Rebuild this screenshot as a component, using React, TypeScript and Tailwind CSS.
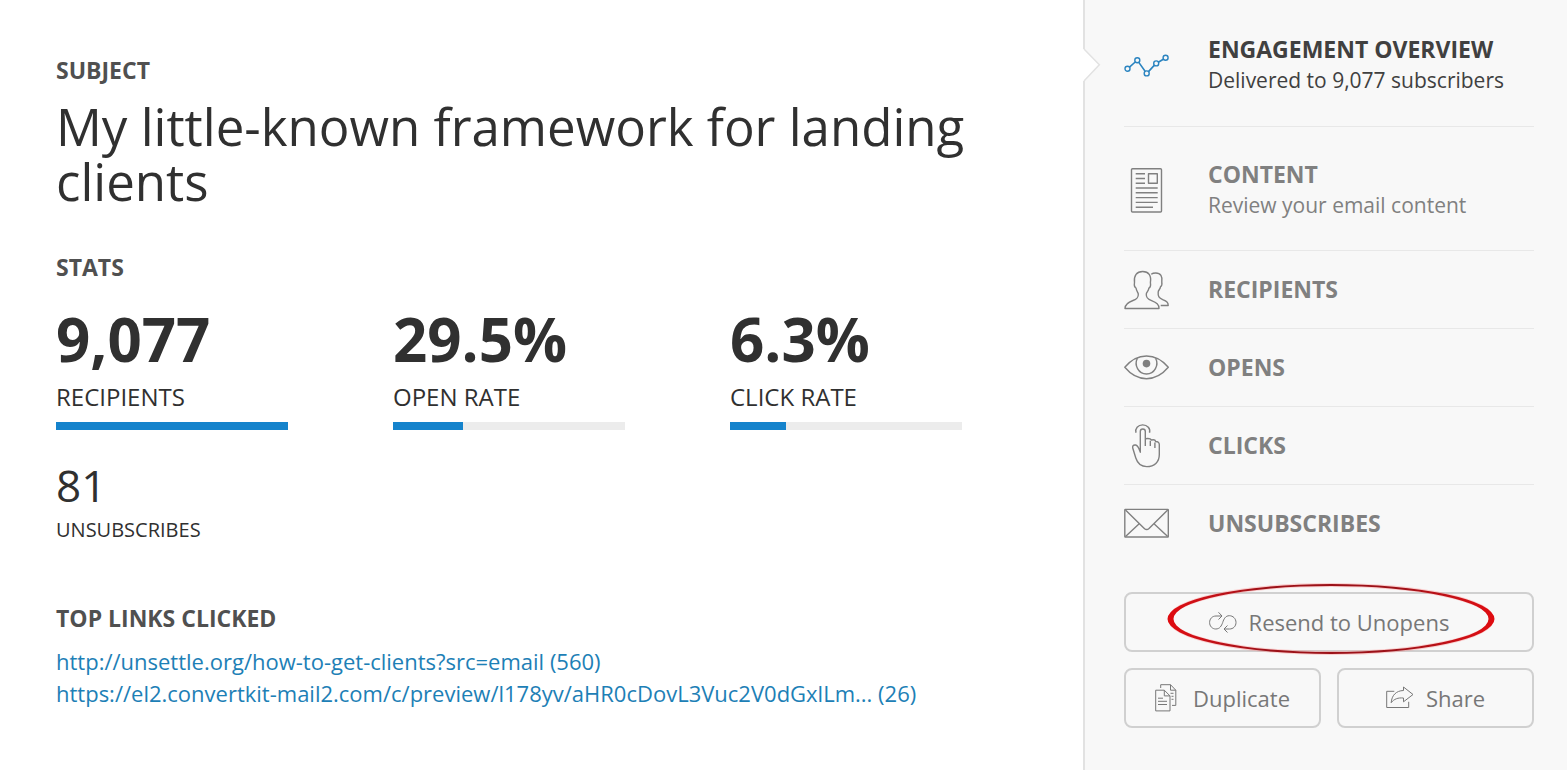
import type { ReactNode } from 'react'

const links = [
  { label: 'http://unsettle.org/how-to-get-clients?src=email (560)', href: '#how-to-get-clients' },
  { label: 'https://el2.convertkit-mail2.com/c/preview/l178yv/aHR0cDovL3Vuc2V0dGxlLm... (26)', href: '#preview' },
]

const stats = [
  { value: '9,077', label: 'RECIPIENTS', fill: 100 },
  { value: '29.5%', label: 'OPEN RATE', fill: 30 },
  { value: '6.3%', label: 'CLICK RATE', fill: 24 },
]

function Icon({ children, className = '' }: { children: ReactNode; className?: string }) {
  return (
    <svg
      className={`h-[45px] w-[45px] shrink-0 ${className}`}
      viewBox="0 0 45 45"
      fill="none"
      stroke="currentColor"
      strokeWidth="1.4"
      strokeLinejoin="round"
      aria-hidden="true"
    >
      {children}
    </svg>
  )
}

const ChartIcon = () => (
  <Icon className="text-[#2b84c0]">
    <path d="M5.5 24.2 11.2 19M14.8 19.4l6.3 8.8M24.5 28.6l5.7-6.2M34.3 19.2l5-2.9" strokeWidth="1.6" />
    <circle cx="3.5" cy="25.8" r="2.5" />
    <circle cx="13.3" cy="17.2" r="2.5" />
    <circle cx="22.7" cy="30.4" r="2.5" />
    <circle cx="32.2" cy="20.4" r="2.5" />
    <circle cx="41.6" cy="14.8" r="2.5" />
  </Icon>
)

const ContentIcon = () => (
  <Icon>
    <rect x="7.5" y="0.8" width="30" height="43.2" rx="1" />
    <rect x="24.5" y="5.7" width="8.8" height="9.6" />
    <path d="M11.7 5.7H21M11.7 10.5H21M11.7 15.3H21M11.7 20h22M11.7 24.8h22M11.7 29.6h22M11.7 34.4h22M11.7 39.2H29" />
  </Icon>
)

const RecipientsIcon = () => (
  <Icon>
    <path d="M1 41.500c0-4.200 3-6.200 8-8 4.300-1.500 5.500-3 5.300-6.500-.1-1.600-1.800-2.600-2.300-6-1.500-.8-2-2.500-1.500-5.500-.8-7 2.200-11 8.200-11s8.800 4 7.700 11c.5 3-.2 4.900-1.500 5.700-.5 3.200-2.500 4-2.600 5.800-.3 3.500 1 5 5.300 6.700 5 2 7.400 3.600 7.400 7.800z" />
    <path d="M27.200 7.300c1.300-1 2.900-1.300 4.600-1.300 4.700 0 7 3.300 6 9.200.4 2.500 0 3.800-1.200 4.500-.5 2.800-2.200 3.300-2.400 5.300-.4 4.500.8 6 4.500 7.700 4 1.700 5.600 2.600 5.500 5.800h-7.500" />
  </Icon>
)

const OpensIcon = () => (
  <Icon>
    <path d="M.8 22.300C6.500 15.500 13.500 11 22.500 11s16 4.500 21.800 11.300C38.500 29.200 31.500 33.700 22.500 33.700S6.500 29.200.8 22.300z" />
    <path d="M13.400 13.200C9.900 20 14.300 29 22.500 29s12.600-9 9.100-15.800" />
    <circle cx="22.5" cy="18.6" r="3.8" fill="currentColor" stroke="none" />
  </Icon>
)

const ClicksIcon = () => (
  <Icon>
    <path d="M12 9.700C10.800 5.500 14 1.900 18.700 1.900s8 3.600 6.800 7.800" />
    <path d="M21.300 23V8.600c0-3.400-5-3.400-5 0v20.600c-1.200-3.200-2-6.800-4.700-7.200-2.500-.4-3.400 1.200-2.800 3.300l3 9.700c1.800 5.600 5.300 8.600 11 8.600 7.500 0 12.500-4.500 12.500-12.200V21.500c0-1.900-1.500-3.100-3.600-3-.4-1.400-2.300-2-4.200-1.500-.8-1.200-3.200-1.800-6.200-1.200M26.300 23v-5.300M30.900 25v-5.500" />
  </Icon>
)

const UnsubscribesIcon = () => (
  <Icon>
    <rect x="0.8" y="8.4" width="43.5" height="27.6" rx="0.5" />
    <path d="M1.500 9l18.800 18.400c1.700 1.600 3 1.600 4.700 0L43.700 9M1.500 35.400 15.200 22.800M43.700 35.400 30 22.800" />
  </Icon>
)

const reports = [
  {
    title: 'ENGAGEMENT OVERVIEW',
    text: 'Delivered to 9,077 subscribers',
    icon: ChartIcon,
    className: 'pt-[34px] pb-[30px] text-[#404040]',
  },
  {
    title: 'CONTENT',
    text: 'Review your email content',
    icon: ContentIcon,
    className: 'pt-[32px] pb-[29px] text-[#808080]',
  },
  { title: 'RECIPIENTS', icon: RecipientsIcon, className: 'py-4 text-[#808080]' },
  { title: 'OPENS', icon: OpensIcon, className: 'py-4 text-[#808080]' },
  { title: 'CLICKS', icon: ClicksIcon, className: 'py-4 text-[#808080]' },
  { title: 'UNSUBSCRIBES', icon: UnsubscribesIcon, className: 'py-4 text-[#808080]' },
]

const buttonClass =
  'relative flex h-[60px] w-full items-center justify-center rounded-lg border-2 border-[#d0d0d0] text-[22px] text-[#777]'

function Heading({ children, className = '' }: { children: ReactNode; className?: string }) {
  return <h2 className={`text-[23px] leading-[30px] font-bold text-[#505050] ${className}`}>{children}</h2>
}

export default function App() {
  return (
    <div className="flex min-h-screen bg-white font-['Open_Sans',sans-serif] text-[#303030]">
      <main className="min-w-0 flex-1 pt-[55px] pr-[109px] pb-14 pl-14">
        {/* Subject */}
        <Heading>SUBJECT</Heading>
        <h1 className="mt-[14px] text-[51px] leading-[55px]">My little-known framework for landing clients</h1>

        {/* Stats */}
        <Heading className="mt-[43px]">STATS</Heading>
        <div className="mt-[27px] grid grid-cols-3 gap-[105px] pr-3">
          {stats.map((stat) => (
            <div key={stat.label}>
              <p className="text-[60px] leading-[60px] font-bold">{stat.value}</p>
              <p className="mt-3 text-[24px] leading-[32px]">{stat.label}</p>
              <div className="mt-[9px] h-2 bg-[#ececec]">
                <div className="h-2 bg-[#1583cc]" style={{ width: `${stat.fill}%` }} />
              </div>
            </div>
          ))}
        </div>
        <p className="mt-[33px] text-[44px] leading-[44px]">81</p>
        <p className="mt-2 text-[20px] leading-[30px]">UNSUBSCRIBES</p>

        {/* Links */}
        <Heading className="mt-[58px]">TOP LINKS CLICKED</Heading>
        <ul className="mt-3 text-[22px] leading-[32px] text-[#1d80b6]">
          {links.map((link) => (
            <li key={link.label}>
              <a className="hover:underline" href={link.href}>
                {link.label}
              </a>
            </li>
          ))}
        </ul>
      </main>

      <aside className="relative w-[484px] shrink-0 border-l-2 border-[#e2e2e2] bg-[#f8f8f8] pr-[33px] pl-[39px]">
        {/* Notch beside the active report */}
        <svg className="absolute top-[48px] -left-[2px] h-[34px] w-[18px]" viewBox="0 0 18 34" aria-hidden="true">
          <path d="M0 1h1L16.500 16.700 1 33H0z" fill="#fff" />
          <path d="M1 1l15.300 15.700L1 33" fill="none" stroke="#e2e2e2" strokeWidth="1.5" />
        </svg>

        <nav>
          <ul className="divide-y divide-[#e8e8e8]">
            {reports.map((report) => (
              <li key={report.title}>
                <a
                  href="#report"
                  className={`flex items-center gap-[39px] text-[23px] leading-[31px] ${report.className}`}
                >
                  <report.icon />
                  <span>
                    <strong className="block font-bold">{report.title}</strong>
                    {report.text && <span className="block text-[21px]">{report.text}</span>}
                  </span>
                </a>
              </li>
            ))}
          </ul>
        </nav>

        {/* Actions */}
        <div className="mt-[30px] grid grid-cols-2 gap-4">
          <button type="button" className={`${buttonClass} col-span-2 gap-3`}>
            <svg className="h-6 w-7" viewBox="0 0 28 24" fill="none" stroke="currentColor" aria-hidden="true">
              <path d="M12.700 6H7C3.200 6 .6 8.800.6 12.500S3.300 19 6.800 19c4 0 5.700-3.200 6.900-6.500C14.800 9 16.500 5.700 20.300 5.700c3.700 0 6.700 2.900 6.700 6.800 0 3.800-2.800 6.500-6.500 6.500h-5" />
              <path d="M9.500 2.300 13 6 9.500 9.500M18.500 15.500 15 19l3.500 3.500" />
            </svg>
            Resend to Unopens
            {/* Marker ring */}
            <svg
              className="pointer-events-none absolute -top-[12px] left-[39px] h-[74px] w-[332px]"
              viewBox="0 0 332 74"
              aria-hidden="true"
            >
              <defs>
                <linearGradient id="ring">
                  <stop offset="0" stopColor="#e00b10" />
                  <stop offset="0.08" stopColor="#d01016" />
                  <stop offset="0.3" stopColor="#9c1118" />
                  <stop offset="0.7" stopColor="#9c1118" />
                  <stop offset="0.92" stopColor="#d01016" />
                  <stop offset="1" stopColor="#e00b10" />
                </linearGradient>
              </defs>
              <ellipse cx="166" cy="37" rx="161" ry="34" fill="none" stroke="#ff8080" strokeOpacity="0.35" strokeWidth="4" />
              <path
                fill="url(#ring)"
                fillRule="evenodd"
                d="M2.500 37a163.500 35 0 1 0 327 0a163.500 35 0 1 0-327 0zM8.500 37a157.500 33 0 1 0 315 0a157.500 33 0 1 0-315 0z"
              />
            </svg>
          </button>
          <button type="button" className={`${buttonClass} gap-4`}>
            <svg className="h-7 w-[22px]" viewBox="0 0 22 28" fill="none" stroke="currentColor" aria-hidden="true">
              <path d="M.7 6.200h8.600l5.700 5.700v15H.7zM9.300 6.200v5.700H15M3 14.200h5M3 17.300h9M3 20.500h9" />
              <path d="M5.700 4V.7h9.800l5.300 5.500v15.200H17M15.500.7v5.500h5.300M15.500 9.300H18.500M16.500 12.300h2M16.500 15.300h2" />
            </svg>
            Duplicate
          </button>
          <button type="button" className={`${buttonClass} gap-3`}>
            <svg className="h-6 w-7" viewBox="0 0 28 24" fill="none" stroke="currentColor" aria-hidden="true">
              <path d="M8.300 5.300H.7v16.200h22v-5.700" />
              <path d="M17.500 1 27 8.500l-9.500 7.300V12c-5.500-.5-9.500 1-12.300 4.700C5.700 9.500 10 4.700 17.500 4.500z" />
            </svg>
            Share
          </button>
        </div>
      </aside>
    </div>
  )
}
